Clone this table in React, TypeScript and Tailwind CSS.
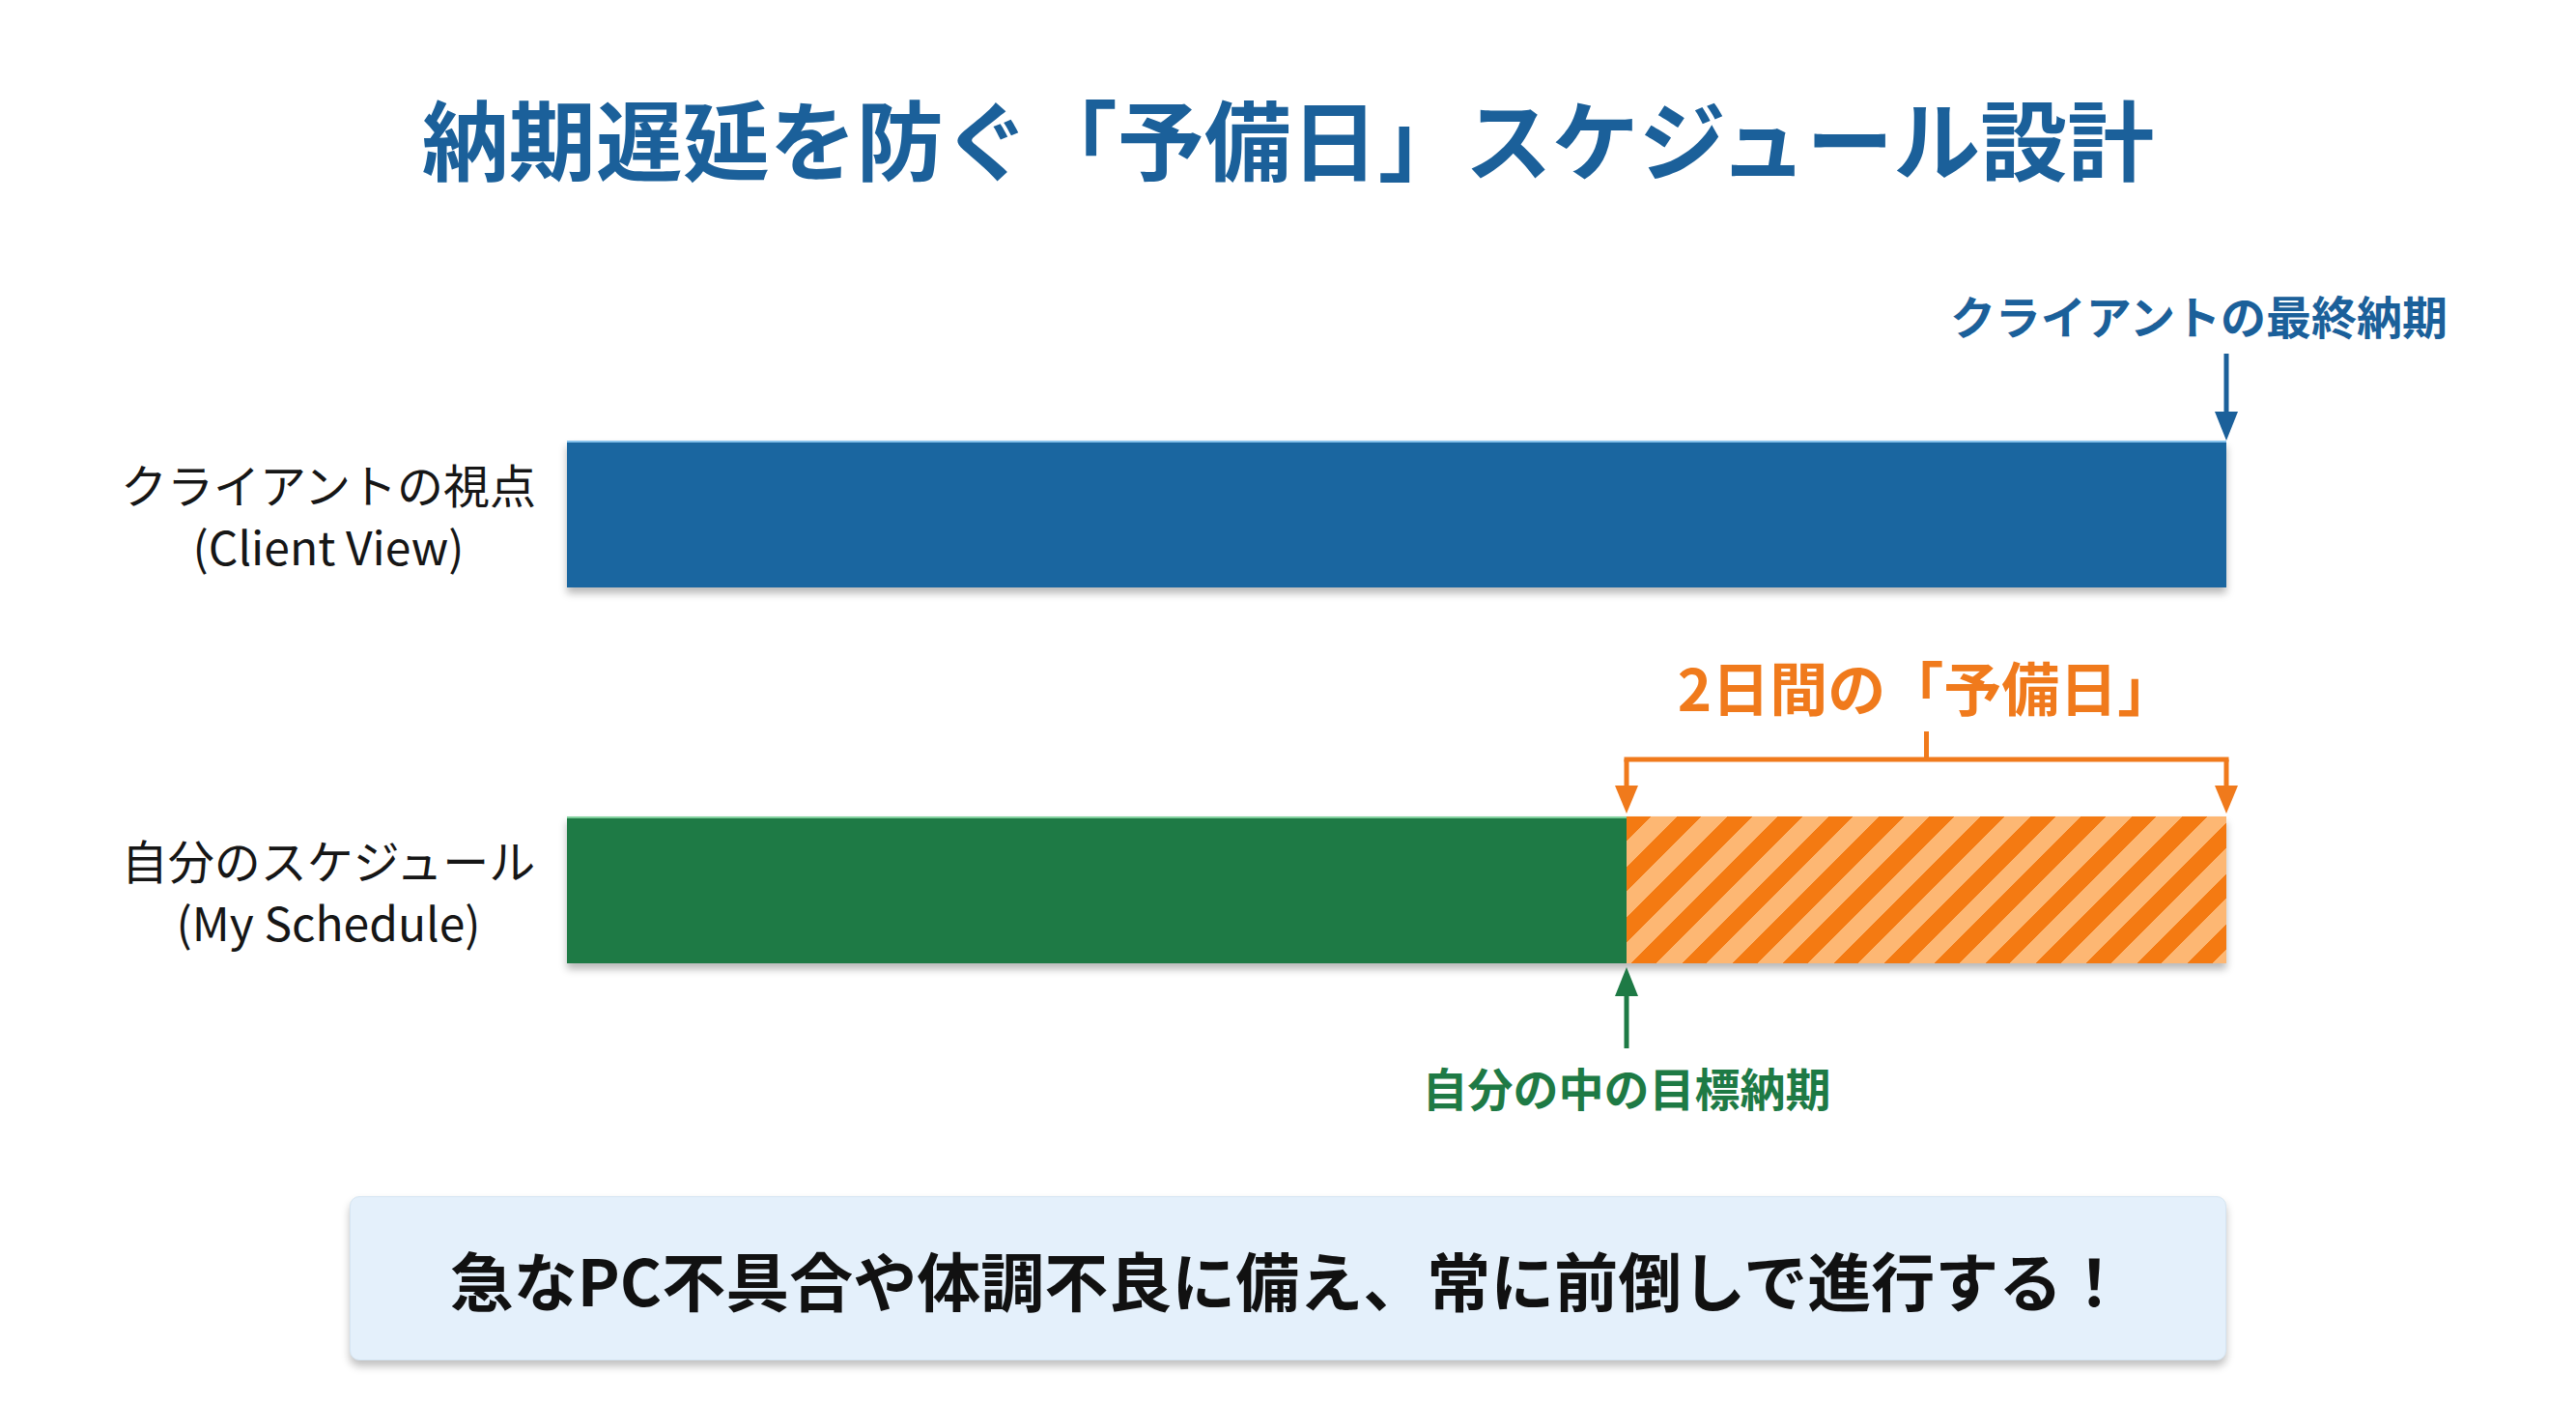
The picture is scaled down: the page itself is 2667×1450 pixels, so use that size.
const font = "font-['Noto_Sans_CJK_JP','Noto_Sans',sans-serif]";

const DownArrow = ({ color }: { color: string }) => (
  <svg width="30" height="100" viewBox="0 0 30 100" className="-mr-[15px] block">
    <line x1="15" y1="10" x2="15" y2="72" stroke={color} strokeWidth="5" />
    <polygon points="3,70 27,70 15,100" fill={color} />
  </svg>
);

const Bracket = () => (
  <svg width="651" height="100" viewBox="0 0 651 100" className="ml-[1082px] block">
    <g stroke="#f07a1c" strokeWidth="5" fill="none">
      <line x1="325.5" y1="12" x2="325.5" y2="41" />
      <line x1="12.5" y1="41" x2="638.5" y2="41" />
      <line x1="15" y1="41" x2="15" y2="70" />
      <line x1="636" y1="41" x2="636" y2="70" />
    </g>
    <polygon points="3,68 27,68 15,97" fill="#f07a1c" />
    <polygon points="624,68 648,68 636,97" fill="#f07a1c" />
  </svg>
);

const UpArrow = () => (
  <svg width="30" height="88" viewBox="0 0 30 88" className="ml-[1082px] block">
    <polygon points="15,4 27,34 3,34" fill="#1e7a45" />
    <line x1="15" y1="32" x2="15" y2="88" stroke="#1e7a45" strokeWidth="5" />
  </svg>
);

const RowLabel = ({ jp, en }: { jp: string; en: string }) => (
  <div className="w-[470px] shrink-0 text-center text-[48px] leading-[64px] text-[#161616]">
    <div>{jp}</div>
    <div>{en}</div>
  </div>
);

export default function App() {
  return (
    <div className={`${font} w-full h-[1450px] bg-white overflow-hidden flex flex-col pt-[81px]`}>
      <h1 className="h-[120px] flex items-center justify-center text-[90px] font-bold text-[#1b609a]">
        納期遅延を防ぐ「予備日」スケジュール設計
      </h1>

      <div className="flex flex-col pl-[105px] mt-[95px]">
        {/* client deadline note */}
        <div className="flex gap-[12px]">
          <div className="w-[470px] shrink-0" />
          <div className="w-[1947px] flex flex-col">
            <div className="h-[60px] text-right text-[47px] leading-[60px] font-bold text-[#1b609a]">
              クライアントの最終納期
            </div>
            <div className="w-[1718px] flex justify-end">
              <DownArrow color="#1b609a" />
            </div>
          </div>
        </div>

        {/* client bar */}
        <div className="flex gap-[12px] items-center">
          <RowLabel jp="クライアントの視点" en="(Client View)" />
          <div className="w-[1718px] h-[152px] bg-[#1a66a0] border-t-2 border-[#86c2ec] shadow-[0_6px_8px_rgba(0,0,0,0.28)]" />
        </div>

        {/* buffer note */}
        <div className="flex gap-[12px] mt-[67px]">
          <div className="w-[470px] shrink-0" />
          <div className="w-[1718px] flex flex-col">
            <div className="ml-[1097px] w-[621px] h-[70px] text-center text-[60px] leading-[70px] font-bold text-[#f07a1c]">
              2日間の「予備日」
            </div>
            <Bracket />
          </div>
        </div>

        {/* my schedule bar */}
        <div className="flex gap-[12px] items-center">
          <RowLabel jp="自分のスケジュール" en="(My Schedule)" />
          <div className="w-[1718px] h-[152px] flex shadow-[0_6px_8px_rgba(0,0,0,0.28)]">
            <div className="w-[1097px] h-full bg-[#1e7a45] border-t-2 border-[#7fcf9c]" />
            <div className="w-[621px] h-full bg-[repeating-linear-gradient(135deg,#f47a12_0px,#f47a12_18px,#fdb773_18px,#fdb773_37px)]" />
          </div>
        </div>

        {/* my target note */}
        <div className="flex gap-[12px]">
          <div className="w-[470px] shrink-0" />
          <div className="w-[1718px] flex flex-col">
            <UpArrow />
            <div className="ml-[797px] w-[600px] h-[56px] mt-[12px] text-center text-[47px] leading-[56px] font-bold text-[#1e7a45]">
              自分の中の目標納期
            </div>
          </div>
        </div>
      </div>

      <div className="ml-[362px] mt-[85px] w-[1943px] h-[170px] rounded-[10px] bg-[#e4f0fb] border border-[#d5e5f2] shadow-[0_6px_8px_rgba(0,0,0,0.25)] flex items-center justify-center">
        <span className="text-[66px] font-bold text-[#111111]">
          急なPC不具合や体調不良に備え、常に前倒しで進行する！
        </span>
      </div>
    </div>
  );
}
